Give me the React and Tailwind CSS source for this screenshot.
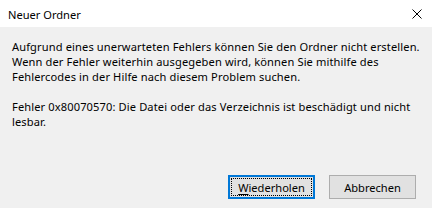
import React from 'react';

export default function App() {
  return (
    <div className="w-[432px] h-[208px] flex flex-col bg-[#f0f0f0] text-black text-[11.1px] leading-[15px] font-['Noto_Sans',sans-serif] overflow-hidden">
      <div className="h-[27px] bg-white flex items-center justify-between pl-[8px] pr-[10px] shrink-0">
        <span className="pt-[1px]">Neuer Ordner</span>
        <svg width="10" height="10" viewBox="0 0 10 10" className="mt-[1px]">
          <path d="M0.5 0.5 L9.5 9.5 M9.5 0.5 L0.5 9.5" stroke="#000" strokeWidth="1" fill="none" />
        </svg>
      </div>
      <div className="flex-1 flex flex-col px-[12px] pt-[12px] whitespace-nowrap tracking-[0.12px]">
        <p>
          Aufgrund eines unerwarteten Fehlers können Sie den Ordner nicht erstellen.
          <br />
          Wenn der Fehler weiterhin ausgegeben wird, können Sie mithilfe des
          <br />
          Fehlercodes in der Hilfe nach diesem Problem suchen.
        </p>
        <p className="mt-[15px]">
          Fehler 0x80070570: Die Datei oder das Verzeichnis ist beschädigt und nicht
          <br />
          lesbar.
        </p>
      </div>
      <div className="flex justify-end gap-[14px] pr-[16px] pb-[9px] shrink-0">
        <button className="w-[87px] h-[24px] bg-[#e1e1e1] border-2 border-[#0078d7] p-[1px]">
          <span className="flex items-center justify-center w-full h-full border border-dotted border-black">
            <span className="underline underline-offset-2">W</span>iederholen
          </span>
        </button>
        <button className="w-[87px] h-[24px] bg-[#e1e1e1] border border-[#adadad] flex items-center justify-center">
          Abbrechen
        </button>
      </div>
    </div>
  );
}
